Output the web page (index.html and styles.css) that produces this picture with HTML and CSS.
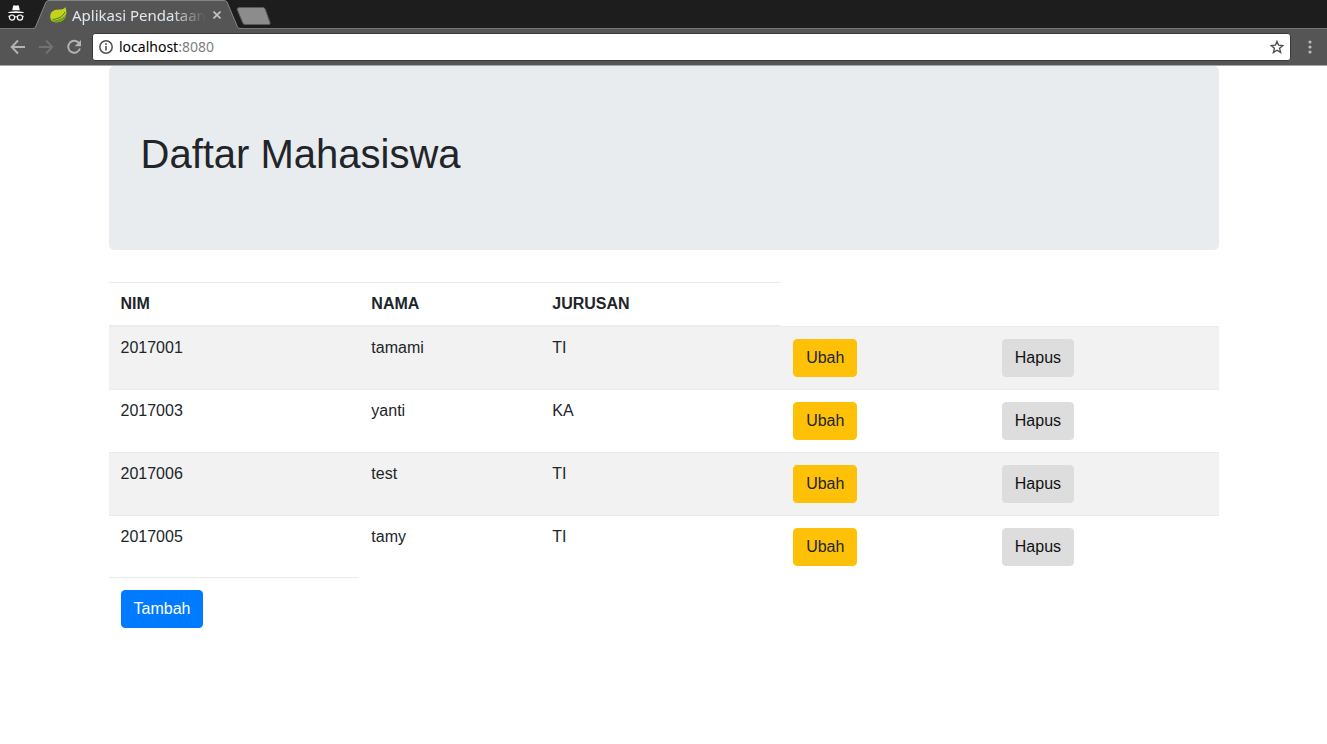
FILE: index.html
```html
<!DOCTYPE html>
<html lang="id">
<head>
<meta charset="utf-8">
<title>Aplikasi Pendataan</title>
<link rel="stylesheet" href="styles.css">
</head>
<body>
<header class="browser">
  <div class="tabstrip">
    <svg class="incognito" width="16" height="18" viewBox="0 0 16 18" aria-hidden="true">
      <path d="M4.200 5.200 5.200.8Q5.500 0 6.200.3L8 .8l1.800-.5Q10.500 0 10.800.8l1 4.400z" fill="#fff"/>
      <path d="M0 8Q0 6.300 8 6.300T16 8z" fill="#fff"/>
      <circle cx="4" cy="12.600" r="2.600" fill="none" stroke="#fff" stroke-width="1.200"/>
      <circle cx="12" cy="12.600" r="2.600" fill="none" stroke="#fff" stroke-width="1.200"/>
      <path d="M6.400 12.200q1.600-1 3.200 0M.3 11.200l1.500.8M15.700 11.200l-1.500.8" fill="none" stroke="#fff"/>
    </svg>
    <div class="tab">
      <svg class="tab-shape" width="208" height="29" viewBox="0 0 208 29" aria-hidden="true">
        <path d="M0 29 2 28 13 2Q14 .5 16 .5H191Q193 .5 194 2L205 28l3 1z" fill="#555"/>
        <path d="M0 28.500Q2 28.500 2.500 27L13 2Q14 .5 16 .5H191Q193 .5 194 2L204.500 27Q205 28.500 208 28.500" fill="none" stroke="#858585"/>
      </svg>
      <svg class="leaf" width="17" height="16" viewBox="0 0 17 16" aria-hidden="true">
        <path d="M15.500 0C17.500 7 16 12 11.500 14.300 8 16 3 15.300 1.200 13.500-.8 9 .2 4.500 4.500 3.200 8.500 2 13.500 3.500 15.500 0z" fill="#c3d21b"/>
        <path d="M1.200 13.500C6 13.500 13.500 12 16.300 6c-.2 4.500-2 7-4.800 8.300C8 16 3 15.400 1.200 13.500z" fill="#6fa51d"/>
        <path d="M2.500 12.500C8 12 13 9.500 15 5" fill="none" stroke="#30622f" stroke-width=".8"/>
      </svg>
      <span class="tab-title">Aplikasi Pendataan</span>
      <button class="tab-close" type="button" aria-label="Tutup tab">
        <svg width="8" height="8" viewBox="0 0 8 8"><path d="M.5.5l7 7M7.500.5l-7 7" stroke="#c4c4c4" stroke-width="1.600"/></svg>
      </button>
    </div>
    <button class="new-tab" type="button" aria-label="Tab baru">
      <svg width="36" height="18" viewBox="0 0 36 18"><path d="M3.500.5H27Q28.500.5 29.200 2l4.800 13.500Q34.500 17.500 33 17.500H9Q7.500 17.500 6.800 16L1.200 2.500Q.8.500 3.500.5z" fill="#8c8c8c" stroke="#5a5a5a"/></svg>
    </button>
  </div>
  <div class="toolbar">
    <button class="nav" type="button" aria-label="Kembali"><svg width="16" height="16" viewBox="0 0 16 16"><path d="M15 8H2M8 1.500 1.700 8 8 14.500" fill="none" stroke="#b4b4b4" stroke-width="1.900"/></svg></button>
    <button class="nav" type="button" aria-label="Maju"><svg width="16" height="16" viewBox="0 0 16 16"><path d="M1 8h13M8 1.500 14.300 8 8 14.500" fill="none" stroke="#727272" stroke-width="1.900"/></svg></button>
    <button class="nav" type="button" aria-label="Muat ulang"><svg width="16" height="16" viewBox="0 0 16 16"><path d="M13.300 4.500A6 6 0 1 0 14 9.500" fill="none" stroke="#b4b4b4" stroke-width="1.900"/><path d="M15 1v6.300H8.700z" fill="#b4b4b4"/></svg></button>
    <div class="address">
      <svg width="14" height="14" viewBox="0 0 14 14" aria-hidden="true"><circle cx="7" cy="7" r="6.200" fill="none" stroke="#505050" stroke-width="1.500"/><path d="M7 6v4.500M7 3.300v1.600" stroke="#505050" stroke-width="1.600"/></svg>
      <div class="url"><span>localhost</span><span class="port">:8080</span></div>
      <button class="star" type="button" aria-label="Tandai halaman"><svg width="14" height="14" viewBox="0 0 14 14"><path d="M7 1.400 8.600 5.200l4.200.4-3.200 2.700 1 4.100L7 10.200l-3.600 2.200 1-4.100L1.200 5.600l4.200-.4z" fill="none" stroke="#505050" stroke-width="1.400"/></svg></button>
    </div>
    <button class="menu" type="button" aria-label="Menu"><svg width="4" height="14" viewBox="0 0 4 14" fill="#bbb"><circle cx="2" cy="2" r="1.600"/><circle cx="2" cy="7" r="1.600"/><circle cx="2" cy="12" r="1.600"/></svg></button>
  </div>
</header>
<main class="container">
  <div class="jumbotron"><h1>Daftar Mahasiswa</h1></div>
  <table class="table">
    <colgroup><col class="col-nim"><col class="col-nama"><col class="col-jurusan"><col class="col-ubah"><col></colgroup>
    <thead>
      <tr><th scope="col">NIM</th><th scope="col">NAMA</th><th scope="col">JURUSAN</th></tr>
    </thead>
    <tbody>
      <tr><td>2017001</td><td>tamami</td><td>TI</td><td><a class="btn btn-warning" href="#">Ubah</a></td><td><button class="btn btn-plain" type="button">Hapus</button></td></tr>
      <tr><td>2017003</td><td>yanti</td><td>KA</td><td><a class="btn btn-warning" href="#">Ubah</a></td><td><button class="btn btn-plain" type="button">Hapus</button></td></tr>
      <tr><td>2017006</td><td>test</td><td>TI</td><td><a class="btn btn-warning" href="#">Ubah</a></td><td><button class="btn btn-plain" type="button">Hapus</button></td></tr>
      <tr><td>2017005</td><td>tamy</td><td>TI</td><td><a class="btn btn-warning" href="#">Ubah</a></td><td><button class="btn btn-plain" type="button">Hapus</button></td></tr>
    </tbody>
    <tfoot>
      <tr><td><a class="btn btn-primary" href="#">Tambah</a></td></tr>
    </tfoot>
  </table>
</main>
</body>
</html>
```
FILE: styles.css
```css
*, *::before, *::after { box-sizing: border-box; }

body {
  margin: 0;
  background: #fff;
  color: #212529;
  font: 16px/24px "Liberation Sans", Arial, sans-serif;
}

button { font: inherit; cursor: pointer; }
svg { display: block; flex: none; }

/* Browser frame */
.browser { font-family: "Noto Sans", "Open Sans", sans-serif; }

.tabstrip {
  display: flex;
  align-items: flex-start;
  height: 29px;
  background: #1d1d1d;
  border-bottom: 1px solid #777;
}
.incognito { margin: 5px 9px 0 8px; }

.tab {
  position: relative;
  display: flex;
  align-items: center;
  width: 208px;
  height: 29px;
  padding: 0 16px 0 17px;
}
.tab-shape { position: absolute; inset: 0; }
.leaf, .tab-title, .tab-close { position: relative; }
.tab-title {
  flex: 1;
  min-width: 0;
  margin-left: 5px;
  overflow: hidden;
  color: #e2e8ee;
  font-size: 15px;
  white-space: nowrap;
  mask-image: linear-gradient(to right, #000 100px, transparent 134px);
}
.tab-close, .new-tab, .nav, .star, .menu {
  display: flex;
  align-items: center;
  justify-content: center;
  padding: 0;
  border: 0;
  background: none;
}
.tab-close { width: 16px; height: 16px; margin-left: 2px; }
.new-tab { margin: 7px 0 0 -5px; position: relative; }

.toolbar {
  display: flex;
  align-items: center;
  height: 37px;
  padding: 0 7px 0 4px;
  background: #555;
  border-bottom: 1px solid #a4a4a4;
}
.nav { width: 28px; height: 28px; }
.address {
  display: flex;
  flex: 1;
  align-items: center;
  height: 28px;
  margin: 0 9px 0 4px;
  padding: 0 6px;
  border: 1px solid #3a3a3a;
  border-radius: 3px;
  background: #fff;
}
.url {
  flex: 1;
  margin-left: 6px;
  color: #000;
  font-size: 14px;
}
.port { color: #808080; }
.menu { width: 20px; height: 28px; }

/* Page */
.container {
  width: 100%;
  max-width: 1140px;
  margin: 0 auto;
  padding: 0 15px;
}
.jumbotron {
  display: flow-root;
  margin-bottom: 32px;
  padding: 64px 32px;
  border-radius: 5px;
  background: #e9ecef;
}
.jumbotron h1 {
  margin: 0 0 8px;
  font-size: 40px;
  font-weight: 500;
  line-height: 48px;
}

.table {
  width: 100%;
  margin-bottom: 16px;
  border-collapse: collapse;
  table-layout: fixed;
  line-height: 18px;
}
.col-nim { width: 22.6%; }
.col-nama { width: 16.3%; }
.col-jurusan { width: 21.7%; }
.col-ubah { width: 18.8%; }
.table th, .table td {
  padding: 12px;
  border-top: 1px solid #e9ecef;
  text-align: left;
  vertical-align: top;
}
.table thead th { border-bottom: 2px solid #e9ecef; }
.table tbody tr:nth-of-type(odd) { background: rgba(0, 0, 0, 0.05); }

.btn {
  display: inline-block;
  padding: 6px 12px;
  border: 1px solid transparent;
  border-radius: 4px;
  line-height: 24px;
  text-align: center;
  text-decoration: none;
  vertical-align: middle;
}
.btn-warning { border-color: #ffc107; background: #ffc107; color: #212529; }
.btn-plain { border-color: #ddd; background: #ddd; color: #111; }
.btn-primary { border-color: #007bff; background: #007bff; color: #fff; }
```
